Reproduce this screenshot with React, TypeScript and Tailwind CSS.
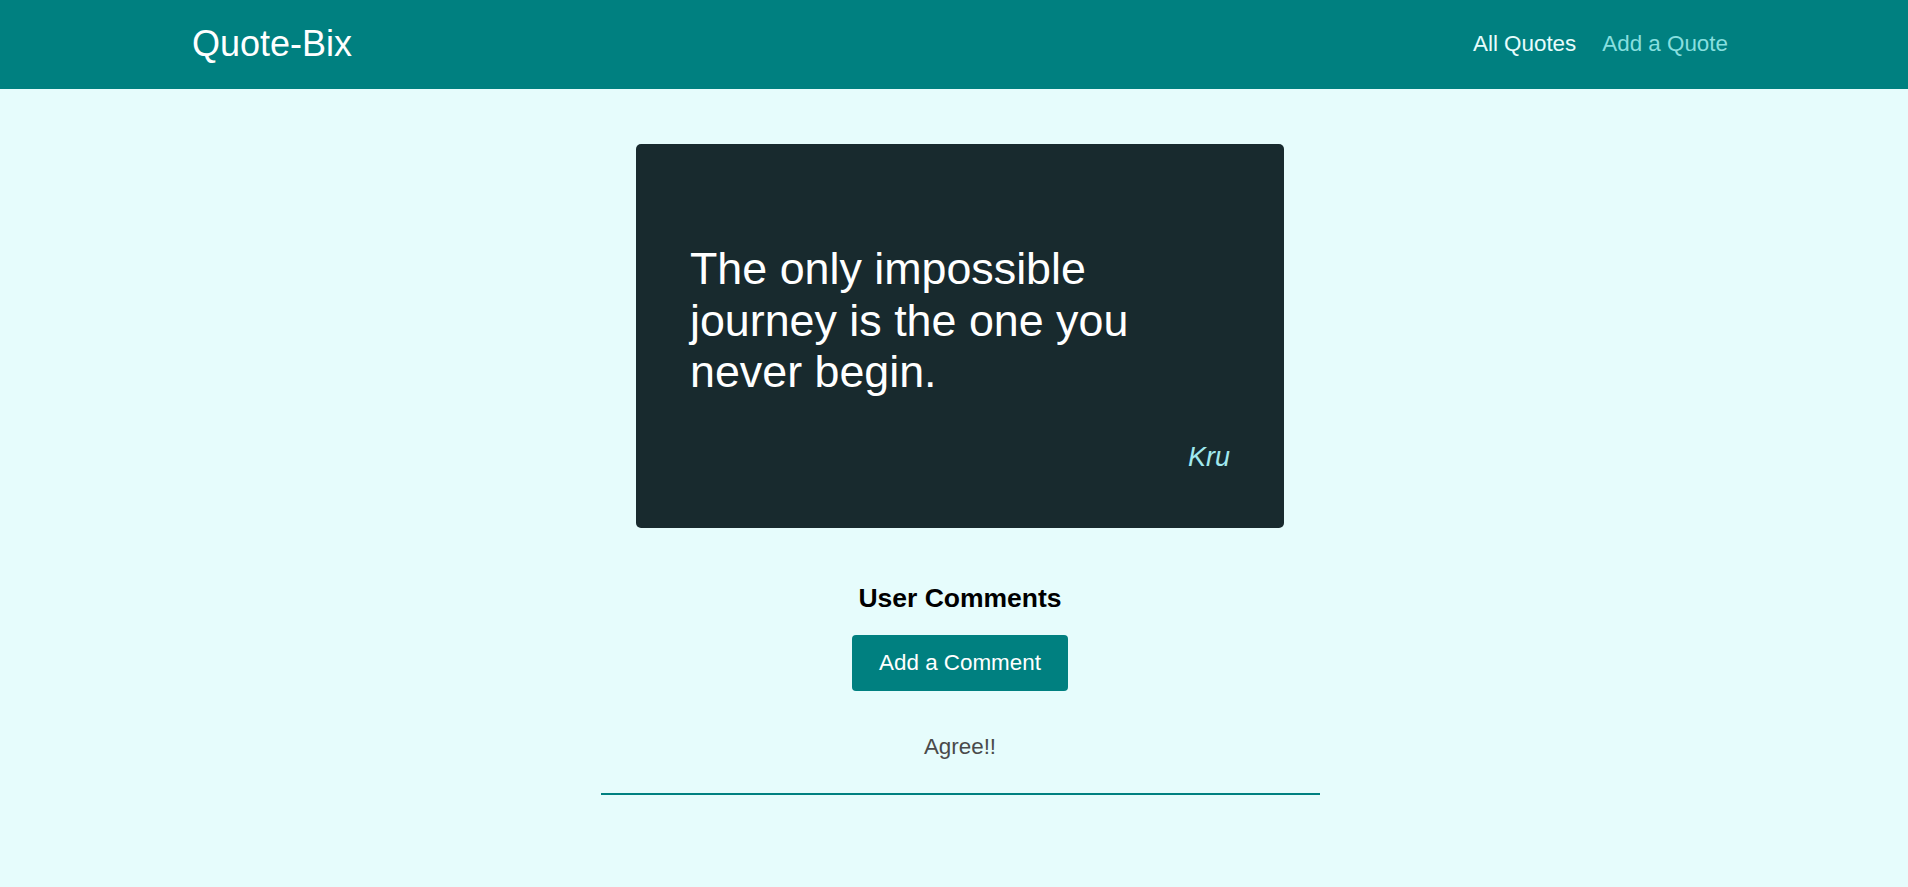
export default function App() {
  return (
    <div className="min-h-screen bg-[#e6fcfc] font-['Liberation_Sans',Arial,sans-serif]">
      <header className="h-[89px] bg-[#008080] flex items-center justify-between pl-[192px] pr-[180px]">
        <div className="text-[36px] leading-[41px] text-white -mt-[2px]">Quote-Bix</div>
        <nav className="flex items-center gap-[26px] text-[22.4px] leading-[26px] -mt-[2px]">
          <a href="#" className="text-[#e6fcfc]">
            All Quotes
          </a>
          <a href="#" className="text-[#88dfdf]">
            Add a Quote
          </a>
        </nav>
      </header>

      <main className="pl-[12px] flex flex-col items-center">
        <figure className="mt-[55px] w-[648px] rounded-[5px] bg-[#182a2e] px-[54px] pt-[99px] pb-[55px] text-white">
          <p className="text-[44.8px] leading-[51.5px]">
            The only impossible journey is the one you never begin.
          </p>
          <figcaption className="mt-[44px] text-right italic text-[27px] leading-[31px] text-[#a0e8ee]">
            Kru
          </figcaption>
        </figure>

        <section className="mt-[55px] w-[719px] flex flex-col items-center">
          <h2 className="text-[26.5px] leading-[30px] font-bold text-black">User Comments</h2>
          <button
            type="button"
            className="mt-[22px] bg-[#008080] text-white text-[22.4px] leading-[26px] px-[27px] py-[15px] rounded-[4px]"
          >
            Add a Comment
          </button>
          <ul className="mt-[43px] w-full">
            <li className="text-center text-[22.4px] leading-[26px] text-[#4a4a4a] pb-[33px] border-b-2 border-[#008080]">
              Agree!!
            </li>
          </ul>
        </section>
      </main>
    </div>
  );
}
